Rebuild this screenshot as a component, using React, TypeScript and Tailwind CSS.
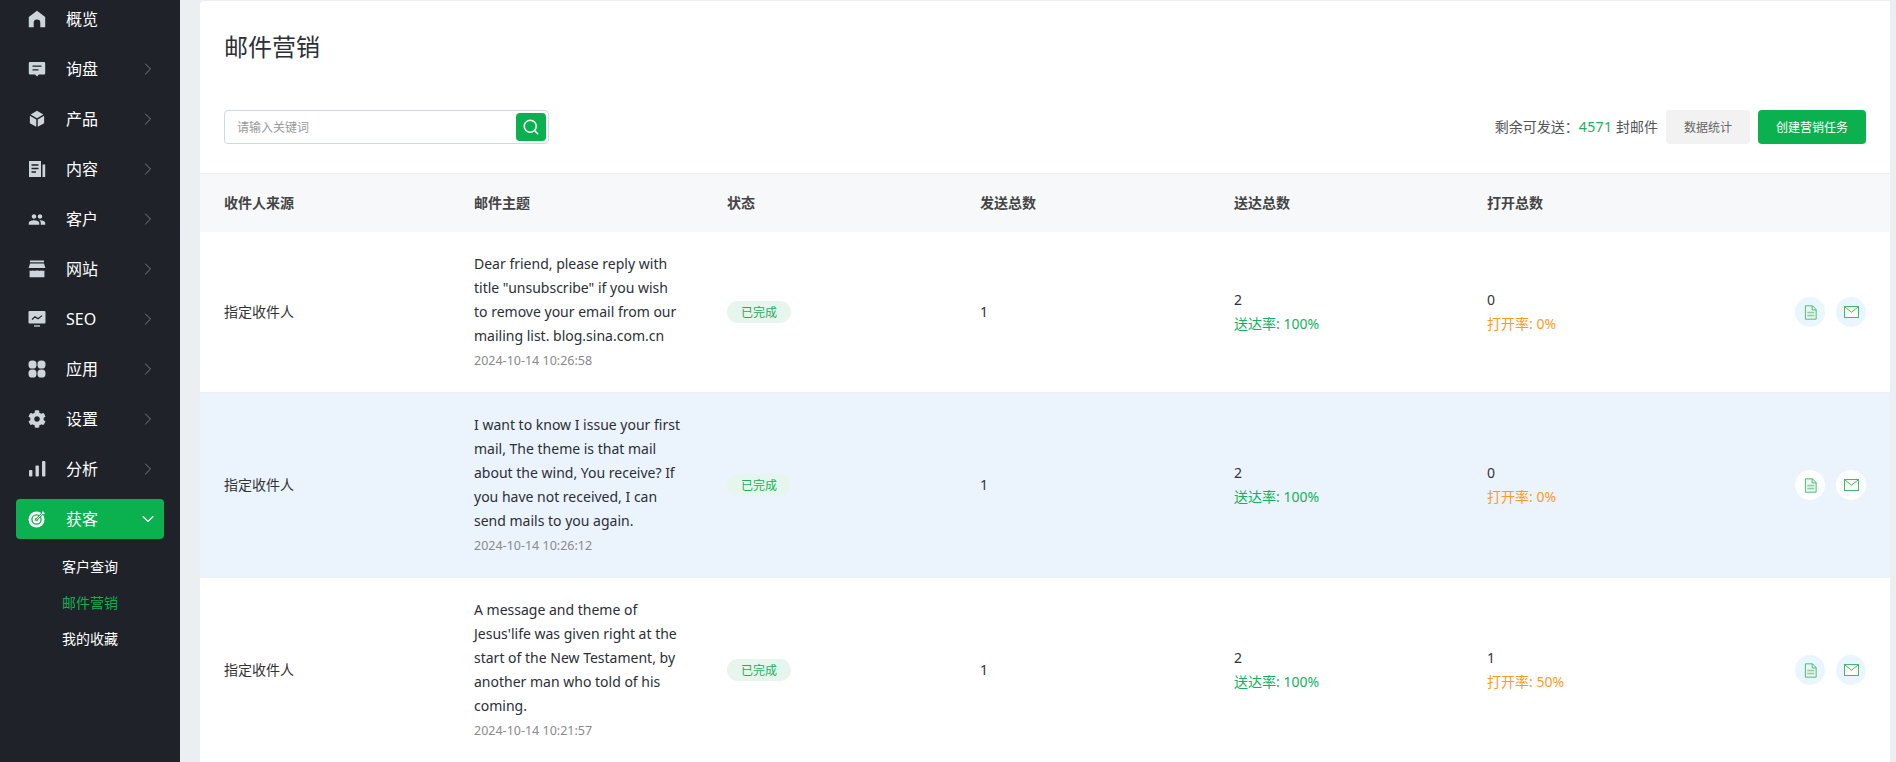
import React from 'react';
import { ChevronRight, ChevronDown, Search } from 'lucide-react';
import { RiBox3Fill } from 'react-icons/ri';
import { MdPeople } from 'react-icons/md';
import { FaCog } from 'react-icons/fa';

const HomeIcon = () => (
  <svg viewBox="0 0 18 18" className="w-[18px] h-[18px]" fill="currentColor">
    <path d="M9 .8 17.2 7v10.2h-4.9v-4.4a3.3 3.3 0 0 0-6.6 0v4.4H.8V7z" />
  </svg>
);

const MessageIcon = () => (
  <svg viewBox="0 0 18 18" className="w-[18px] h-[18px]">
    <path d="M2 2h14a1.2 1.2 0 0 1 1.2 1.2v10a1.2 1.2 0 0 1-1.2 1.2h-5.2L9 16.6l-1.8-2.2H2A1.2 1.2 0 0 1 .8 13.2v-10A1.2 1.2 0 0 1 2 2z" fill="currentColor" />
    <path d="M4.5 6.2h9M4.5 9.8h6" stroke="#1f2329" strokeWidth="1.3" />
  </svg>
);

const PaperIcon = () => (
  <svg viewBox="0 0 18 18" className="w-[18px] h-[18px]">
    <path d="M1 1h12v16H1z" fill="currentColor" />
    <path d="M14.5 4.5h2.7V17h-2.7z" fill="currentColor" />
    <path d="M3.5 5h7M3.5 8.5h7M3.5 12h4.5" stroke="#1f2329" strokeWidth="1.3" />
  </svg>
);

const StoreIcon = () => (
  <svg viewBox="0 0 18 18" className="w-[18px] h-[18px]" fill="currentColor">
    <rect x="2" y="0.5" width="14" height="1.8" />
    <path d="M2 3.6h14L17.4 8H.6z" />
    <path d="M1.6 10.4c.8.4 2.2.4 3.2 0 1 .4 2.2.4 3.2 0h2c1 .4 2.2.4 3.2 0 1 .4 2.4.4 3.2 0v6.9H1.6z" />
  </svg>
);

const SeoIcon = () => (
  <svg viewBox="0 0 18 18" className="w-[18px] h-[18px]">
    <rect x="0.5" y="1" width="17" height="12.5" rx="1" fill="currentColor" />
    <path d="M4 9.5 7 6.8l3 2 4-3.2" fill="none" stroke="#1f2329" strokeWidth="1.2" />
    <rect x="6" y="15.3" width="6" height="1.3" fill="currentColor" />
  </svg>
);

const AppsIcon = () => (
  <svg viewBox="0 0 18 18" className="w-[18px] h-[18px]" fill="currentColor">
    <rect x="0.5" y="0.5" width="8" height="8" rx="3.6" />
    <rect x="9.5" y="0.5" width="8" height="8" rx="3.6" />
    <rect x="0.5" y="9.5" width="8" height="8" rx="3.6" />
    <rect x="9.5" y="9.5" width="8" height="8" rx="3.6" />
  </svg>
);

const BarsIcon = () => (
  <svg viewBox="0 0 18 18" className="w-[18px] h-[18px]" fill="currentColor">
    <rect x="1" y="10" width="3.4" height="6.5" rx="1" />
    <rect x="7.5" y="5.5" width="3.4" height="11" rx="1" />
    <rect x="14" y="1" width="3.4" height="15.5" rx="1" />
  </svg>
);

const TargetIcon = () => (
  <svg viewBox="0 0 18 18" className="w-[18px] h-[18px]">
    <circle cx="8.5" cy="9.5" r="8" fill="#fff" />
    <circle cx="8.5" cy="9.5" r="4.6" fill="none" stroke="#0cb14f" strokeWidth="1.3" />
    <circle cx="8.5" cy="9.5" r="1.6" fill="#0cb14f" />
    <path d="M8.5 9.5 14.6 3.4" stroke="#0cb14f" strokeWidth="2.4" />
    <path d="M8.5 9.5 15 3" stroke="#fff" strokeWidth="1" />
    <path d="M13.6 3.2 15 .8l.6 1.7 1.8.5-2.3 1.5z" fill="#fff" />
  </svg>
);

const DocIcon = () => (
  <svg viewBox="0 0 14 16" className="w-[13px] h-[15px]" fill="none">
    <path d="M1.5.8h7.7l3.9 4v10.4H1.5z" stroke="#3fba6c" strokeWidth="1" fill="#eaf6f0" />
    <path d="M8.8 1v4.2h4.2" stroke="#3fba6c" strokeWidth="1" />
    <rect x="3.5" y="7.2" width="7.5" height="1.7" fill="#8fcfa6" />
    <rect x="3.5" y="10.4" width="7.5" height="1.7" fill="#8fcfa6" />
  </svg>
);

const MailIcon = () => (
  <svg viewBox="0 0 15 12" className="w-[15px] h-[12px]" fill="none">
    <rect x="0.5" y="0.5" width="14" height="11" stroke="#3fba6c" strokeWidth="1" fill="#fbfdf6" />
    <path d="M.8.8 7.5 6.2 14.2.8" stroke="#3fba6c" strokeWidth="1" />
  </svg>
);

const navItems = [
  { label: '概览', icon: <HomeIcon /> },
  { label: '询盘', icon: <MessageIcon />, arrow: true },
  { label: '产品', icon: <RiBox3Fill size={22} />, arrow: true },
  { label: '内容', icon: <PaperIcon />, arrow: true },
  { label: '客户', icon: <MdPeople size={21} />, arrow: true },
  { label: '网站', icon: <StoreIcon />, arrow: true },
  { label: 'SEO', icon: <SeoIcon />, arrow: true },
  { label: '应用', icon: <AppsIcon />, arrow: true },
  { label: '设置', icon: <FaCog size={18} />, arrow: true },
  { label: '分析', icon: <BarsIcon />, arrow: true },
];

const rows = [
  {
    subject: ['Dear friend, please reply with', 'title "unsubscribe" if you wish', 'to remove your email from our', 'mailing list. blog.sina.com.cn'],
    time: '2024-10-14 10:26:58',
    opened: '0',
    openRate: '0%',
  },
  {
    subject: ['I want to know I issue your first', 'mail, The theme is that mail', 'about the wind, You receive? If', 'you have not received, I can', 'send mails to you again.'],
    time: '2024-10-14 10:26:12',
    opened: '0',
    openRate: '0%',
    active: true,
  },
  {
    subject: ['A message and theme of', "Jesus'life was given right at the", 'start of the New Testament, by', 'another man who told of his', 'coming.'],
    time: '2024-10-14 10:21:57',
    opened: '1',
    openRate: '50%',
  },
];

const gridCols = 'grid grid-cols-[250px_253px_253px_254px_253px_253px_1fr]';

function Sidebar() {
  return (
    <aside className="w-[180px] shrink-0 bg-[#1f2329] px-4 -mt-px">
      <nav className="flex flex-col gap-[10px]">
        {navItems.map((item) => (
          <div key={item.label} className="h-10 flex items-center pl-3 text-white text-base">
            <span className="w-[18px] h-[18px] flex items-center justify-center text-[#ced4dc]">{item.icon}</span>
            <span className="ml-[20px] flex-1">{item.label}</span>
            {item.arrow && <ChevronRight size={20} strokeWidth={1.2} className="text-[#7a7e82] mr-[6px]" />}
          </div>
        ))}
        <div className="h-10 flex items-center pl-3 text-white text-base bg-[#0cb14f] rounded">
          <span className="w-[18px] h-[18px] flex items-center justify-center"><TargetIcon /></span>
          <span className="ml-[20px] flex-1">获客</span>
          <ChevronDown size={20} strokeWidth={1.4} className="text-white mr-[6px]" />
        </div>
      </nav>
      <div className="mt-[10px] flex flex-col text-sm pl-[46px]">
        <div className="h-9 flex items-center text-white">客户查询</div>
        <div className="h-9 flex items-center text-[#0cb14f]">邮件营销</div>
        <div className="h-9 flex items-center text-white">我的收藏</div>
      </div>
    </aside>
  );
}

function Row({ row }: { row: (typeof rows)[number] }) {
  return (
    <div className={`${gridCols} items-center border-b border-[#eef0f3] text-sm text-[#333] ${row.active ? 'bg-[#ebf3fd]' : 'bg-white'}`}>
      <div className="pl-6">指定收件人</div>
      <div className="pl-6 pt-5 pb-[18px] whitespace-nowrap">
        {row.subject.map((line) => (
          <div key={line} className="leading-6 text-[#2b2f36]">{line}</div>
        ))}
        <div className="leading-[26px] text-[12.5px] text-[#8a8a8a]">{row.time}</div>
      </div>
      <div className="pl-6">
        <span className="w-16 h-[22px] pt-px rounded-full bg-[#e7f6ec] text-[#14b25a] text-xs flex items-center justify-center">已完成</span>
      </div>
      <div className="pl-6">1</div>
      <div className="pl-6 leading-6">
        <div>2</div>
        <div className="text-[#14b25a]">送达率: 100%</div>
      </div>
      <div className="pl-6 leading-6">
        <div>{row.opened}</div>
        <div className="text-[#ff9a1f]">打开率: {row.openRate}</div>
      </div>
      <div className="pr-6 flex justify-end gap-[11px]">
        <button className={`w-[30px] h-[30px] rounded-full flex items-center justify-center ${row.active ? 'bg-white' : 'bg-[#eaf6fe]'}`}>
          <DocIcon />
        </button>
        <button className={`w-[30px] h-[30px] rounded-full flex items-center justify-center ${row.active ? 'bg-white' : 'bg-[#eaf6fe]'}`}>
          <MailIcon />
        </button>
      </div>
    </div>
  );
}

export default function App() {
  return (
    <div className="h-screen overflow-hidden flex bg-[#ebeff3] font-['Noto_Sans','Noto_Sans_CJK_SC',sans-serif]">
      <Sidebar />
      <main className="ml-5 mr-[6px] mt-px flex-1 min-w-0 bg-white rounded-tl overflow-hidden">
        <h1 className="pl-6 pt-[30px] text-2xl leading-8 text-[#2b2f36]">邮件营销</h1>
        <div className="mt-[47px] px-6 flex items-center justify-between h-[34px]">
          <div className="w-[325px] h-[34px] border border-[#cbdaea] rounded flex items-center pl-3 pr-[2px]">
            <span className="flex-1 pt-px text-xs text-[#999]">请输入关键词</span>
            <button className="w-[30px] h-7 bg-[#0cb14f] rounded flex items-center justify-center text-white">
              <Search size={18} strokeWidth={2} />
            </button>
          </div>
          <div className="flex items-center text-sm text-[#555]">
            <span>剩余可发送：<span className="text-[#14b25a] tracking-[0.4px]">4571</span> 封邮件</span>
            <button className="ml-2 w-[84px] h-[34px] pt-px bg-[#f2f2f2] rounded text-xs text-[#666]">数据统计</button>
            <button className="ml-2 w-[108px] h-[34px] pt-px bg-[#0cb14f] rounded text-xs text-white">创建营销任务</button>
          </div>
        </div>
        <div className={`${gridCols} mt-[29px] h-[59px] items-center bg-[#f7f8fa] border-t border-[#eceef2] text-sm font-bold text-[#444]`}>
          <div className="pl-6">收件人来源</div>
          <div className="pl-6">邮件主题</div>
          <div className="pl-6">状态</div>
          <div className="pl-6">发送总数</div>
          <div className="pl-6">送达总数</div>
          <div className="pl-6">打开总数</div>
        </div>
        {rows.map((row) => (
          <Row key={row.time} row={row} />
        ))}
      </main>
    </div>
  );
}
